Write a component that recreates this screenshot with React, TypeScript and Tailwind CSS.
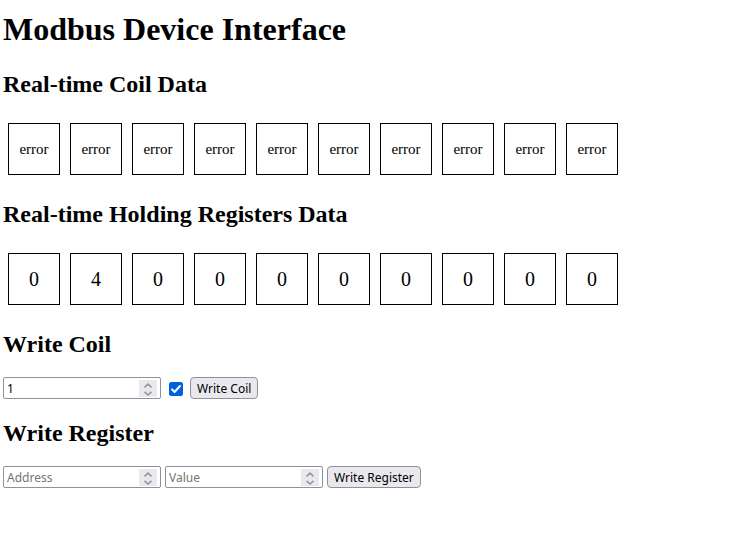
import { useState } from "react";

const coils = Array.from({ length: 10 }, () => "error");
const registers = ["0", "4", "0", "0", "0", "0", "0", "0", "0", "0"];

const controlFont = "font-['Noto_Sans',sans-serif] text-[12px] leading-[18px]";

function Heading({ children }: { children: string }) {
  return <h2 className="text-2xl leading-7 font-bold">{children}</h2>;
}

function Cells({ values, size }: { values: string[]; size: string }) {
  return (
    <div className="flex flex-wrap gap-2.5 p-[5px]">
      {values.map((value, i) => (
        <div
          key={i}
          className={`flex size-[52px] items-center justify-center border border-black ${size}`}
        >
          {value}
        </div>
      ))}
    </div>
  );
}

type NumberFieldProps = {
  label: string;
  value: string;
  onChange: (value: string) => void;
  placeholder?: string;
};

function NumberField({ label, value, onChange, placeholder }: NumberFieldProps) {
  const step = (delta: number) => onChange(String(Number(value || 0) + delta));
  return (
    <div className="flex h-[22px] w-[158px] items-start rounded-[2px] border border-[#8f8f9d] bg-white px-[3px] pt-0.5">
      <input
        type="number"
        aria-label={label}
        value={value}
        placeholder={placeholder}
        onChange={(e) => onChange(e.target.value)}
        className={`min-w-0 flex-1 appearance-none bg-transparent outline-none placeholder:text-[#757575] [-moz-appearance:textfield] [&::-webkit-inner-spin-button]:appearance-none ${controlFont}`}
      />
      <div className="flex w-[18px] flex-col bg-[#e9e9ed]">
        <button
          type="button"
          aria-label={`Increase ${label}`}
          onClick={() => step(1)}
          className="flex h-[9px] items-end justify-center"
        >
          <svg width="10" height="6" viewBox="0 0 10 6" fill="none" stroke="#9595a2" strokeWidth="1.6">
            <path d="M1.5 4.4 5 1.2 8.5 4.4" />
          </svg>
        </button>
        <button
          type="button"
          aria-label={`Decrease ${label}`}
          onClick={() => step(-1)}
          className="flex h-2 items-end justify-center"
        >
          <svg width="10" height="6" viewBox="0 0 10 6" fill="none" stroke="#9595a2" strokeWidth="1.6">
            <path d="M1.5 0.8 5 4 8.5 0.8" />
          </svg>
        </button>
      </div>
    </div>
  );
}

function ActionButton({ children }: { children: string }) {
  return (
    <button
      type="submit"
      className={`h-[22px] rounded-[4px] border border-[#8f8f9d] bg-[#e9e9ed] px-1.5 pt-0.5 ${controlFont}`}
    >
      {children}
    </button>
  );
}

export default function App() {
  const [coilAddress, setCoilAddress] = useState("1");
  const [coilOn, setCoilOn] = useState(true);
  const [address, setAddress] = useState("");
  const [value, setValue] = useState("");

  return (
    <main className="bg-white px-[3px] pt-[11px] font-['Liberation_Serif',serif] text-black">
      <h1 className="mb-[23px] text-[32px] leading-9 font-bold">Modbus Device Interface</h1>

      <div className="flex flex-col gap-5">
        <Heading>Real-time Coil Data</Heading>
        <Cells values={coils} size="text-[15px]" />

        <Heading>Real-time Holding Registers Data</Heading>
        <Cells values={registers} size="text-xl" />

        <section className="flex flex-col gap-[19px]">
          <Heading>Write Coil</Heading>
          <form className="flex items-center gap-1" onSubmit={(e) => e.preventDefault()}>
            <NumberField label="Coil address" value={coilAddress} onChange={setCoilAddress} />
            <label className="mr-[3px] ml-1 grid h-4 w-[14px] place-items-end">
              <input
                type="checkbox"
                aria-label="Coil state"
                checked={coilOn}
                onChange={(e) => setCoilOn(e.target.checked)}
                className="peer col-start-1 row-start-1 size-[14px] appearance-none rounded-[2px] border border-[#8f8f9d] bg-white checked:border-[#0060df] checked:bg-[#0060df]"
              />
              <svg
                className="pointer-events-none invisible col-start-1 row-start-1 peer-checked:visible"
                width="14"
                height="14"
                viewBox="0 0 14 14"
                fill="none"
                stroke="white"
                strokeWidth="2"
                strokeLinecap="round"
                strokeLinejoin="round"
              >
                <path d="M3 7.4 5.6 10 11 4" />
              </svg>
            </label>
            <ActionButton>Write Coil</ActionButton>
          </form>
        </section>

        <section className="flex flex-col gap-[19px]">
          <Heading>Write Register</Heading>
          <form className="flex items-center gap-1" onSubmit={(e) => e.preventDefault()}>
            <NumberField label="Address" placeholder="Address" value={address} onChange={setAddress} />
            <NumberField label="Value" placeholder="Value" value={value} onChange={setValue} />
            <ActionButton>Write Register</ActionButton>
          </form>
        </section>
      </div>
    </main>
  );
}
